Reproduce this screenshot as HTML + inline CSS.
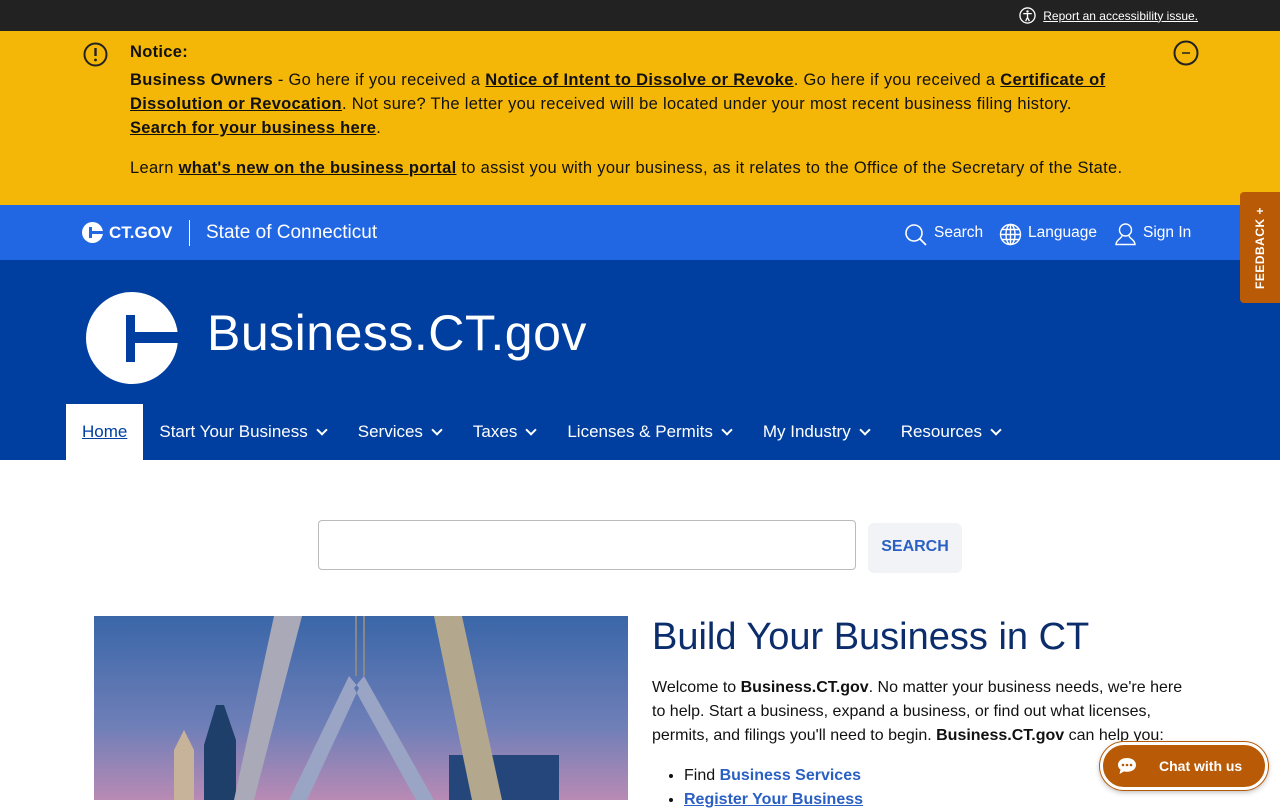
<!DOCTYPE html>
<html><head><meta charset="utf-8"><style>
*{margin:0;padding:0;box-sizing:border-box}
body{width:1280px;height:800px;overflow:hidden;font-family:"Liberation Sans",sans-serif;background:#fff;position:relative}
.top{height:31px;background:#222;color:#fff;font-size:12px}
.top .r{position:absolute;right:82px;top:7px;display:flex;align-items:center;gap:7px}
.top a{color:#fff;text-decoration:underline}
.notice{height:174px;background:#f4b707;position:relative;color:#111;font-size:16.5px;line-height:24px;letter-spacing:.3px}
.notice .txt{position:absolute;left:130px;width:1000px}
.bar{height:55px;background:#2166e2;color:#fff;position:relative}
.main{height:200px;background:#003fa0;position:relative;color:#fff}
.nav{position:absolute;left:66px;top:144px;height:56px;display:flex;font-size:17px}
.nav div{padding:0 16px;line-height:56px;display:flex;align-items:center;gap:6px}
.nav .home{background:#fff;color:#003fa0;text-decoration:underline}
.chev{width:8px;height:8px;border-right:2px solid #fff;border-bottom:2px solid #fff;transform:rotate(45deg);margin-top:-5px;margin-left:4px}
.sbox{position:absolute;left:318px;top:520px;width:538px;height:50px;border:1px solid #bbb;border-radius:4px}
.sbtn{position:absolute;left:868px;top:523px;width:94px;height:50px;background:#f1f3f6;border-radius:6px;color:#2a5fc4;font-weight:bold;font-size:16px;line-height:48px;text-align:center}
h1{position:absolute;left:652px;top:616px;font-weight:normal;color:#0b2d6b;font-size:38px}
.p{position:absolute;left:652px;top:676px;width:540px;font-size:16px;line-height:24px;color:#111}
.p a{color:#2a5fc4;font-weight:bold;text-decoration:none}
.fb{position:absolute;left:1240px;top:192px;width:40px;height:111px;background:#b85a06;border-radius:4px 0 0 4px}
.fb span{position:absolute;left:50%;top:50%;transform:translate(-50%,-50%) rotate(-90deg);color:#fff;font-weight:bold;font-size:12px;white-space:nowrap;letter-spacing:.5px}
.chat{position:absolute;left:1100px;top:742px;width:168px;height:48px;background:#b85a06;border:3px solid #fff;box-shadow:0 0 0 1px #b85a06,0 2px 6px rgba(0,0,0,.3);border-radius:24px;color:#fff;font-size:14px;font-weight:bold}
</style></head><body>
<div class="top"><div class="r"><svg width="17" height="17" viewBox="0 0 18 18"><circle cx="9" cy="9" r="8" fill="none" stroke="#fff" stroke-width="1.4"/><circle cx="9" cy="4.8" r="1.3" fill="#fff"/><path d="M4.5 7h9M9 7v4l-2 4M9 11l2 4" stroke="#fff" stroke-width="1.4" fill="none"/></svg><a>Report an accessibility issue.</a></div></div>
<div class="notice">
<svg style="position:absolute;left:83px;top:11px" width="25" height="25" viewBox="0 0 25 25"><circle cx="12.5" cy="12.5" r="11" fill="none" stroke="#222" stroke-width="2"/><path d="M12.5 6v8" stroke="#222" stroke-width="2.4"/><circle cx="12.5" cy="18" r="1.4" fill="#222"/></svg>
<svg style="position:absolute;left:1173px;top:9px" width="26" height="26" viewBox="0 0 26 26"><circle cx="13" cy="13" r="11.5" fill="none" stroke="#222" stroke-width="2"/><path d="M9 13h8" stroke="#222" stroke-width="1.5"/></svg>
<div style="position:absolute;left:130px;top:9px;font-weight:bold">Notice:</div>
<div class="txt" style="top:37px"><b>Business Owners</b> - Go here if you received a <b><u>Notice of Intent to Dissolve or Revoke</u></b>. Go here if you received a <b><u>Certificate of</u></b><br><b><u>Dissolution or Revocation</u></b>. Not sure? The letter you received will be located under your most recent business filing history.<br><b><u>Search for your business here</u></b>.</div>
<div class="txt" style="top:125px;width:1100px">Learn <b><u>what's new on the business portal</u></b> to assist you with your business, as it relates to the Office of the Secretary of the State.</div>
</div>
<div class="bar">
<svg style="position:absolute;left:82px;top:17px" width="21" height="21" viewBox="0 0 21 21"><circle cx="10.5" cy="10.5" r="10.5" fill="#fff"/><rect x="7" y="5" width="3" height="11" fill="#2166e2"/><rect x="10" y="9" width="11" height="3" fill="#2166e2"/></svg>
<div style="position:absolute;left:109px;top:18px;font-weight:bold;font-size:17px;color:#fff">CT.GOV</div>
<div style="position:absolute;left:189px;top:15px;width:1px;height:26px;background:#fff"></div>
<div style="position:absolute;left:206px;top:17px;font-size:19px">State of Connecticut</div>
<svg style="position:absolute;left:904px;top:18px" width="24" height="24" viewBox="0 0 24 24"><circle cx="10" cy="10" r="8" fill="none" stroke="#fff" stroke-width="1.6"/><path d="M16 16l6 6" stroke="#fff" stroke-width="1.8"/></svg>
<div style="position:absolute;left:934px;top:19px;font-size:15.5px">Search</div>
<svg style="position:absolute;left:999px;top:18px" width="23" height="23" viewBox="0 0 23 23" fill="none" stroke="#fff" stroke-width="1.4"><circle cx="11.5" cy="11.5" r="10"/><ellipse cx="11.5" cy="11.5" rx="4.5" ry="10"/><path d="M1.5 11.5h20M3 6.5h17M3 16.5h17M11.5 1.5v20"/></svg>
<div style="position:absolute;left:1028px;top:19px;font-size:15.5px">Language</div>
<svg style="position:absolute;left:1114px;top:17px" width="23" height="24" viewBox="0 0 23 24" fill="none" stroke="#fff" stroke-width="1.4"><circle cx="11.5" cy="8" r="6"/><path d="M8 13.5c0 3-6 4-6 9h19c0-5-6-6-6-9"/></svg>
<div style="position:absolute;left:1143px;top:19px;font-size:15.5px">Sign In</div>
</div>
<div class="main">
<svg style="position:absolute;left:86px;top:32px" width="92" height="92" viewBox="0 0 92 92"><circle cx="46" cy="46" r="46" fill="#fff"/><rect x="40" y="23" width="9" height="47" fill="#003fa0"/><rect x="49" y="40" width="43" height="11" fill="#003fa0"/></svg>
<div style="position:absolute;left:207px;top:44px;font-size:50px;letter-spacing:.5px">Business.CT.gov</div>
<div class="nav"><div class="home">Home</div><div>Start Your Business<i class="chev"></i></div><div>Services<i class="chev"></i></div><div>Taxes<i class="chev"></i></div><div>Licenses &amp; Permits<i class="chev"></i></div><div>My Industry<i class="chev"></i></div><div>Resources<i class="chev"></i></div></div>
</div>
<div class="sbox"></div><div class="sbtn">SEARCH</div>
<svg style="position:absolute;left:94px;top:616px" width="534" height="184" viewBox="0 0 534 184">
<defs><linearGradient id="sk" x1="0" y1="0" x2="0" y2="1"><stop offset="0" stop-color="#3a66a8"/><stop offset=".6" stop-color="#6f7fb8"/><stop offset="1" stop-color="#b88ab4"/></linearGradient></defs>
<rect width="534" height="184" fill="url(#sk)"/>
<path d="M110 184l0-55 12-40 8 0 12 35v60z" fill="#1d3f6a"/>
<path d="M80 184v-50l10-20 10 20v50z" fill="#c7b29a"/>
<path d="M355 184v-45h110v45z" fill="#24467a"/>
<path d="M140 184L180 0h28L160 184z" fill="#a9a9b8"/>
<path d="M340 0h28l40 184h-30z" fill="#b3a78e"/>
<path d="M255 60L195 184h18L265 72zM270 60l70 124h-18L260 72z" fill="#9aa4c4"/>
<path d="M262 0v60M270 0v60" stroke="#888" stroke-width="2"/>
</svg>
<h1>Build Your Business in CT</h1>
<div class="p">Welcome to <b>Business.CT.gov</b>. No matter your business needs, we're here to help. Start a business, expand a business, or find out what licenses, permits, and filings you'll need to begin. <b>Business.CT.gov</b> can help you:
<ul style="margin:16px 0 0 32px"><li>Find <a>Business Services</a></li><li><a style="text-decoration:underline">Register Your Business</a></li></ul></div>
<div class="fb"><span>FEEDBACK +</span></div>
<div class="chat"><svg style="position:absolute;left:14px;top:12px" width="20" height="18" viewBox="0 0 20 18"><path d="M10 1C4.5 1 1 4 1 8c0 2 1 3.5 2.5 4.6L2.5 17l4.5-2.6c1 .3 2 .4 3 .4 5.5 0 9-3 9-6.8S15.5 1 10 1z" fill="#fff"/><circle cx="6" cy="8" r="1.3" fill="#b85a06"/><circle cx="10" cy="8" r="1.3" fill="#b85a06"/><circle cx="14" cy="8" r="1.3" fill="#b85a06"/></svg><span style="position:absolute;left:56px;top:13px">Chat with us</span></div>
</body></html>
